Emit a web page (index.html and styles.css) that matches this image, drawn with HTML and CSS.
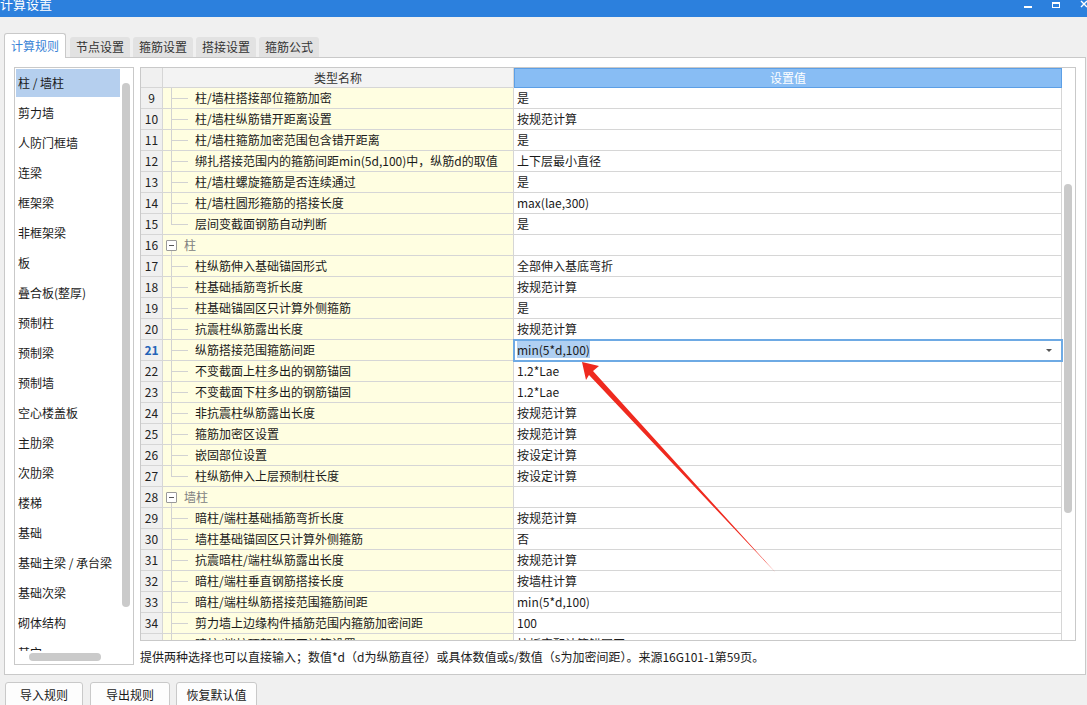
FILE: index.html
```html
<!DOCTYPE html>
<html lang="zh">
<head>
<meta charset="utf-8">
<title>计算设置</title>
<link rel="stylesheet" href="styles.css">
</head>
<body>
<div class="titlebar">
  <span class="title">计算设置</span>
  <svg class="winctl" width="70" height="17" viewBox="1017 0 70 17">
    <rect x="1024" y="6" width="8" height="2" fill="#fff"/>
    <rect x="1052.5" y="2.5" width="7" height="5" fill="none" stroke="#fff" stroke-width="1"/>
    <rect x="1052" y="2" width="8" height="2" fill="#fff"/>
    <path d="M1081 1 L1087 7 M1087 1 L1081 7" stroke="#fff" stroke-width="1.4"/>
  </svg>
</div>

<div class="tabs">
  <div class="tab active">计算规则</div>
  <div class="tab">节点设置</div>
  <div class="tab">箍筋设置</div>
  <div class="tab">搭接设置</div>
  <div class="tab">箍筋公式</div>
</div>

<div class="panel">
  <div class="listbox">
    <div class="items">
      <div class="item sel">柱 / 墙柱</div>
      <div class="item">剪力墙</div>
      <div class="item">人防门框墙</div>
      <div class="item">连梁</div>
      <div class="item">框架梁</div>
      <div class="item">非框架梁</div>
      <div class="item">板</div>
      <div class="item">叠合板(整厚)</div>
      <div class="item">预制柱</div>
      <div class="item">预制梁</div>
      <div class="item">预制墙</div>
      <div class="item">空心楼盖板</div>
      <div class="item">主肋梁</div>
      <div class="item">次肋梁</div>
      <div class="item">楼梯</div>
      <div class="item">基础</div>
      <div class="item">基础主梁 / 承台梁</div>
      <div class="item">基础次梁</div>
      <div class="item">砌体结构</div>
      <div class="item">其它</div>
    </div>
    <div class="lv-track"><div class="lv-thumb"></div></div>
    <div class="lh-track"><div class="lh-thumb"></div></div>
    <div class="corner"></div>
  </div>

  <div class="rightcol">
    <div class="grid">
      <div class="table">
        <div class="row head">
          <div class="num"></div>
          <div class="name hname">类型名称</div>
          <div class="val hval">设置值</div>
        </div>
        <div class="row"><div class="num">9</div><div class="name child">柱/墙柱搭接部位箍筋加密</div><div class="val">是</div></div>
        <div class="row"><div class="num">10</div><div class="name child">柱/墙柱纵筋错开距离设置</div><div class="val">按规范计算</div></div>
        <div class="row"><div class="num">11</div><div class="name child">柱/墙柱箍筋加密范围包含错开距离</div><div class="val">是</div></div>
        <div class="row"><div class="num">12</div><div class="name child">绑扎搭接范围内的箍筋间距min(5d,100)中，纵筋d的取值</div><div class="val">上下层最小直径</div></div>
        <div class="row"><div class="num">13</div><div class="name child">柱/墙柱螺旋箍筋是否连续通过</div><div class="val">是</div></div>
        <div class="row"><div class="num">14</div><div class="name child">柱/墙柱圆形箍筋的搭接长度</div><div class="val">max(lae,300)</div></div>
        <div class="row"><div class="num">15</div><div class="name child last">层间变截面钢筋自动判断</div><div class="val">是</div></div>
        <div class="row"><div class="num">16</div><div class="name group"><span class="toggle"></span><span class="gtext">柱</span></div><div class="val"></div></div>
        <div class="row"><div class="num">17</div><div class="name child">柱纵筋伸入基础锚固形式</div><div class="val">全部伸入基底弯折</div></div>
        <div class="row"><div class="num">18</div><div class="name child">柱基础插筋弯折长度</div><div class="val">按规范计算</div></div>
        <div class="row"><div class="num">19</div><div class="name child">柱基础锚固区只计算外侧箍筋</div><div class="val">是</div></div>
        <div class="row"><div class="num">20</div><div class="name child">抗震柱纵筋露出长度</div><div class="val">按规范计算</div></div>
        <div class="row cur"><div class="num">21</div><div class="name child">纵筋搭接范围箍筋间距</div><div class="val edit"><span class="selected">min(5*d,100)</span><span class="drop"></span></div></div>
        <div class="row"><div class="num">22</div><div class="name child">不变截面上柱多出的钢筋锚固</div><div class="val">1.2*Lae</div></div>
        <div class="row"><div class="num">23</div><div class="name child">不变截面下柱多出的钢筋锚固</div><div class="val">1.2*Lae</div></div>
        <div class="row"><div class="num">24</div><div class="name child">非抗震柱纵筋露出长度</div><div class="val">按规范计算</div></div>
        <div class="row"><div class="num">25</div><div class="name child">箍筋加密区设置</div><div class="val">按规范计算</div></div>
        <div class="row"><div class="num">26</div><div class="name child">嵌固部位设置</div><div class="val">按设定计算</div></div>
        <div class="row"><div class="num">27</div><div class="name child last">柱纵筋伸入上层预制柱长度</div><div class="val">按设定计算</div></div>
        <div class="row"><div class="num">28</div><div class="name group"><span class="toggle"></span><span class="gtext">墙柱</span></div><div class="val"></div></div>
        <div class="row"><div class="num">29</div><div class="name child">暗柱/端柱基础插筋弯折长度</div><div class="val">按规范计算</div></div>
        <div class="row"><div class="num">30</div><div class="name child">墙柱基础锚固区只计算外侧箍筋</div><div class="val">否</div></div>
        <div class="row"><div class="num">31</div><div class="name child">抗震暗柱/端柱纵筋露出长度</div><div class="val">按规范计算</div></div>
        <div class="row"><div class="num">32</div><div class="name child">暗柱/端柱垂直钢筋搭接长度</div><div class="val">按墙柱计算</div></div>
        <div class="row"><div class="num">33</div><div class="name child">暗柱/端柱纵筋搭接范围箍筋间距</div><div class="val">min(5*d,100)</div></div>
        <div class="row"><div class="num">34</div><div class="name child">剪力墙上边缘构件插筋范围内箍筋加密间距</div><div class="val">100</div></div>
        <div class="row"><div class="num">35</div><div class="name child">暗柱/端柱顶部锚固区计算设置</div><div class="val">按板实配计算锚固区</div></div>
      </div>
      <div class="vtrack"><div class="vthumb"></div></div>
    </div>
    <div class="desc">提供两种选择也可以直接输入；数值*d（d为纵筋直径）或具体数值或s/数值（s为加密间距）。来源16G101-1第59页。</div>
  </div>
</div>

<div class="buttons">
  <div class="btn b1">导入规则</div>
  <div class="btn b2">导出规则</div>
  <div class="btn b3">恢复默认值</div>
</div>

<svg class="arrow" width="1087" height="705" viewBox="0 0 1087 705">
  <polygon points="582,362 599,366 593,371 776,573 589,375 586,380" fill="#ef2a1f"/>
</svg>
</body>
</html>
```

FILE: styles.css
```css
* { box-sizing: border-box; }

body {
  margin: 0;
  width: 1087px;
  height: 705px;
  overflow: hidden;
  position: relative;
  background: #f0f0f0;
  font-family: "Noto Sans CJK SC", "Noto Sans", sans-serif;
  font-size: 12px;
  color: #1a1a1a;
}

.titlebar {
  height: 17px;
  background: #2c80dd;
  display: flex;
  justify-content: space-between;
  align-items: flex-start;
  overflow: hidden;
}
.title {
  color: #fff;
  font-size: 13px;
  line-height: 13px;
  margin-top: -3px;
}
.winctl { display: block; }

.tabs {
  display: flex;
  align-items: flex-end;
  height: 23px;
  margin-top: 17px;
  padding-left: 4px;
  gap: 3px;
  position: relative;
  z-index: 2;
}
.tab {
  width: 60px;
  height: 20px;
  line-height: 20px;
  text-align: center;
  background: #e2e2e2;
  color: #333;
  border-radius: 3px 3px 0 0;
  font-size: 12px;
}
.tab.active {
  width: 62px;
  height: 25px;
  margin-bottom: -1px;
  margin-right: 1px;
  background: #fff;
  border: 1px solid #c9c9c9;
  border-bottom: none;
  color: #3a84d6;
  line-height: 23px;
}

.panel {
  width: 1082px;
  height: 618px;
  margin-left: 4px;
  background: #fff;
  border: 1px solid #c9c9c9;
  padding: 9px 9px 9px 9px;
  display: flex;
  gap: 6px;
  position: relative;
  z-index: 1;
}

.listbox {
  width: 120px;
  height: 598px;
  border: 1px solid #c9c9c9;
  display: grid;
  grid-template-columns: 106px 12px;
  grid-template-rows: 583px 13px;
}
.items {
  overflow: hidden;
}
.item {
  height: 28px;
  margin: 1px 1px 2px 1px;
  padding-left: 2px;
  line-height: 28px;
  white-space: nowrap;
  color: #1a1a1a;
}
.item.sel { background: #b5cfee; }
.lv-track { padding-top: 15px; padding-left: 1px; }
.lv-thumb {
  width: 8px;
  height: 524px;
  border-radius: 4px;
  background: #cacaca;
}
.lh-track { padding-top: 2px; padding-left: 14px; }
.lh-thumb {
  width: 72px;
  height: 8px;
  border-radius: 4px;
  background: #cacaca;
}

.rightcol {
  width: 936px;
  display: flex;
  flex-direction: column;
}
.grid {
  height: 575px;
  border: 1px solid #c9c9c9;
  display: flex;
  overflow: hidden;
}
.table {
  width: 921px;
  flex: none;
}
.row {
  display: flex;
  height: 21px;
}
.row.head { height: 20px; }
.num, .name, .val {
  border-right: 1px solid #d6d6d6;
  border-bottom: 1px solid #d6d6d6;
  line-height: 20px;
  white-space: nowrap;
  overflow: hidden;
}
.num {
  width: 22px;
  background: #f0f0f0;
  text-align: center;
  color: #222;
}
.name {
  width: 351px;
  background: #fffee1;
}
.val {
  width: 548px;
  background: #fff;
  padding-left: 3px;
  position: relative;
}
.row.head .num { line-height: 19px; }
.hname {
  background: #f3f3f3;
  text-align: center;
  line-height: 19px;
  color: #333;
}
.hval {
  background: #88bdf4;
  border: 1px solid #5c9fe6;
  color: #fff;
  text-align: center;
  line-height: 18px;
  padding-left: 0;
}

.name.child {
  padding-left: 32px;
  background:
    linear-gradient(#d2d2d2, #d2d2d2) 8px 0 / 1px 100% no-repeat,
    linear-gradient(#d2d2d2, #d2d2d2) 9px 10px / 16px 1px no-repeat,
    #fffee1;
}
.name.child.last {
  background:
    linear-gradient(#d2d2d2, #d2d2d2) 8px 0 / 1px 11px no-repeat,
    linear-gradient(#d2d2d2, #d2d2d2) 9px 10px / 16px 1px no-repeat,
    #fffee1;
}
.name.group {
  display: flex;
  align-items: center;
  padding-left: 3px;
  background:
    linear-gradient(#d2d2d2, #d2d2d2) 8px 15px / 1px 6px no-repeat,
    #fffee1;
}
.toggle {
  width: 11px;
  height: 11px;
  border: 1px solid #9a9a9a;
  border-radius: 1px;
  background: linear-gradient(#555, #555) center / 5px 1px no-repeat, #fff;
  flex: none;
}
.gtext {
  margin-left: 7px;
  color: #808080;
}

.row.cur .num {
  font-weight: bold;
  color: #2463b8;
}
.val.edit {
  outline: 2px solid #6eaae4;
  outline-offset: -1px;
  z-index: 1;
}
.selected {
  background: #b0d0f2;
}
.drop {
  position: absolute;
  right: 9px;
  top: 9px;
  width: 0;
  height: 0;
  border-left: 3px solid transparent;
  border-right: 3px solid transparent;
  border-top: 3px solid #555;
}

.vtrack {
  width: 13px;
  flex: none;
  background: #fff;
  padding-top: 116px;
  padding-left: 2px;
}
.vthumb {
  width: 8px;
  height: 329px;
  border-radius: 4px;
  background: #cacaca;
}

.desc {
  padding-top: 8px;
  line-height: 16px;
  color: #1a1a1a;
  white-space: nowrap;
}

.buttons {
  display: flex;
  margin-top: 7px;
  padding-left: 5px;
}
.btn {
  height: 26px;
  line-height: 24px;
  text-align: center;
  background: #fdfdfd;
  border: 1px solid #c9c9c9;
  border-radius: 3px;
  color: #1a1a1a;
}
.b1 { width: 78px; }
.b2 { width: 80px; margin-left: 7px; }
.b3 { width: 81px; margin-left: 6px; }

.arrow {
  position: absolute;
  left: 0;
  top: 0;
  pointer-events: none;
  z-index: 5;
}
```
